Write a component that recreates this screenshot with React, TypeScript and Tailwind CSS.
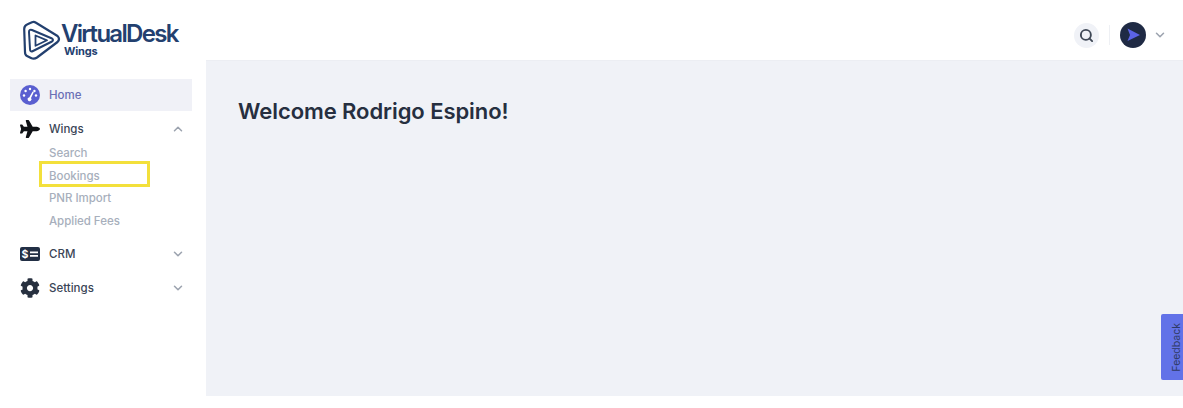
import { ChevronDown, ChevronUp, Search } from "lucide-react";
import { FaCog, FaPlane } from "react-icons/fa";

function Logo() {
  return (
    <div className="flex h-[60px] items-start pl-[23px] pt-[20px]">
      <svg width="39" height="41" viewBox="0 0 39 41" fill="none" stroke="#23406f" strokeLinejoin="round" className="shrink-0">
        <path strokeWidth="2.2" d="M1.2 9 Q1.2 5.5 4.5 4.2 L9 2.2 Q11 1.5 13 2.7 L34.5 16 Q37.5 19 34.5 22 L14 37.5 Q11 39.5 8 38 L4 36 Q2 35 2 32 Z" />
        <path strokeWidth="2" d="M6 12 Q6 9 9 10 L29 18.5 Q31 20 29 21.5 L10 31 Q7 32.5 7 29 Z" />
        <path strokeWidth="1.8" d="M12.5 15.5 L24 20.3 L12.5 25.8 Z" />
      </svg>
      <div className="-ml-[1px] flex flex-col pt-[2px] font-['Inter',sans-serif] text-[#23406f]">
        <span className="text-[24px] leading-[24px] font-semibold tracking-[-1.7px]">VirtualDesk</span>
        <span className="ml-[3px] text-[11px] leading-[11px] font-bold tracking-[-0.2px]">Wings</span>
      </div>
    </div>
  );
}

function GaugeIcon() {
  return (
    <svg width="20" height="20" viewBox="0 0 20 20" className="shrink-0">
      <circle cx="10" cy="10" r="10" fill="#5a5fd0" />
      <g fill="#ffffff">
        <circle cx="10" cy="4" r="1.2" />
        <circle cx="5.6" cy="6" r="1.2" />
        <circle cx="14.4" cy="6" r="1.2" />
        <circle cx="4" cy="10.5" r="1.2" />
        <circle cx="16" cy="10.5" r="1.2" />
        <path d="M12.6 6.6 L13.8 7.2 L11 13 A1.9 1.9 0 1 1 9.2 12.4 Z" />
      </g>
    </svg>
  );
}

function CrmIcon() {
  return (
    <svg width="20" height="14" viewBox="0 0 20 14" className="shrink-0">
      <rect width="20" height="14" rx="2" fill="#222f45" />
      <path d="M10 4.5 H18 V6.3 H10 Z M10 8 H18 V9.8 H10 Z" fill="#ffffff" />
      <text x="5" y="11" textAnchor="middle" fontSize="10.5" fontWeight="700" fontFamily="Inter, sans-serif" fill="#ffffff">
        $
      </text>
    </svg>
  );
}

const subItems = ["Search", "Bookings", "PNR Import", "Applied Fees"];

function Sidebar() {
  return (
    <aside className="flex w-[206px] shrink-0 flex-col bg-white font-['Inter',sans-serif]">
      <Logo />
      <nav className="flex flex-col pr-[14px] pl-[10px] pt-[19px] text-[11.5px] font-medium">
        <a className="flex h-[32px] items-center gap-[9px] bg-[#f0f1f7] pl-[10px] text-[#6a6fb5]">
          <GaugeIcon />
          <span className="pt-[2px]">Home</span>
        </a>
        <div className="mt-[2px] flex h-[32px] items-center pl-[10px] text-[#3a4556]">
          <FaPlane className="h-[20px] w-[20px] text-[#0f1115]" />
          <span className="ml-[9px] pt-[2px]">Wings</span>
          <ChevronUp className="mr-[7px] ml-auto h-[14px] w-[14px] text-[#9ca3af]" strokeWidth={2.6} />
        </div>
        <div className="-mt-[3px] flex flex-col pl-[39px] tracking-[-0.03px] text-[#a7afbc]">
          {subItems.map((item) =>
            item === "Bookings" ? (
              <div key={item} className="relative flex h-[22.7px] items-center pt-[1px]">
                <span>{item}</span>
                <div className="absolute top-[-4px] left-[-10px] h-[26px] w-[111px] border-[3px] border-[#f3e03b]" />
              </div>
            ) : (
              <div key={item} className="flex h-[22.7px] items-center">
                {item}
              </div>
            ),
          )}
        </div>
        <div className="mt-[4px] flex h-[34px] items-center pl-[10px] text-[#3a4556]">
          <CrmIcon />
          <span className="ml-[9px] pt-[2px]">CRM</span>
          <ChevronDown className="mr-[7px] ml-auto h-[14px] w-[14px] text-[#9ca3af]" strokeWidth={2.6} />
        </div>
        <div className="flex h-[34px] items-center pl-[10px] text-[#3a4556]">
          <FaCog className="h-[20px] w-[20px] text-[#27303f]" />
          <span className="ml-[9px] pt-[2px]">Settings</span>
          <ChevronDown className="mr-[7px] ml-auto h-[14px] w-[14px] text-[#9ca3af]" strokeWidth={2.6} />
        </div>
      </nav>
    </aside>
  );
}

function Header() {
  return (
    <header className="flex h-[60px] items-center justify-end bg-white pt-[10px] pr-[16px]">
      <div className="flex h-[25px] w-[25px] items-center justify-center rounded-full bg-[#f0f2f7]">
        <Search className="h-[15px] w-[15px] text-[#3f4856]" strokeWidth={3} />
      </div>
      <div className="mx-[10px] h-[20px] w-px bg-[#eef0f4]" />
      <div className="flex h-[26px] w-[26px] items-center justify-center rounded-full bg-[#1f2a44]">
        <svg width="16" height="16" viewBox="0 0 16 16">
          <path d="M2.5 1.5 L15 8 L2.5 14 L5 8 Z" fill="#5b63e6" />
        </svg>
      </div>
      <ChevronDown className="ml-[7px] h-[14px] w-[14px] text-[#9ca3af]" strokeWidth={2.6} />
    </header>
  );
}

export default function App() {
  return (
    <div className="relative flex h-[408px] w-[1183px] overflow-hidden bg-white">
      <Sidebar />
      <div className="flex min-w-0 flex-1 flex-col">
        <Header />
        <main className="h-[336px] border-t border-[#eceef3] bg-[#f0f2f7] pt-[36px] pl-[32px] font-['Inter',sans-serif]">
          <h1 className="text-[22px] leading-[28px] font-semibold tracking-[-0.07px] text-[#262f40]">
            Welcome Rodrigo Espino!
          </h1>
        </main>
      </div>
      <div className="absolute top-[314px] right-0 flex h-[66px] w-[22px] items-center justify-center rounded-l-[2px] bg-[#6272e8] pl-[9px]">
        <span className="font-['Inter',sans-serif] text-[10.5px] text-[#2f3a66] [writing-mode:vertical-rl] rotate-180">
          Feedback
        </span>
      </div>
    </div>
  );
}
